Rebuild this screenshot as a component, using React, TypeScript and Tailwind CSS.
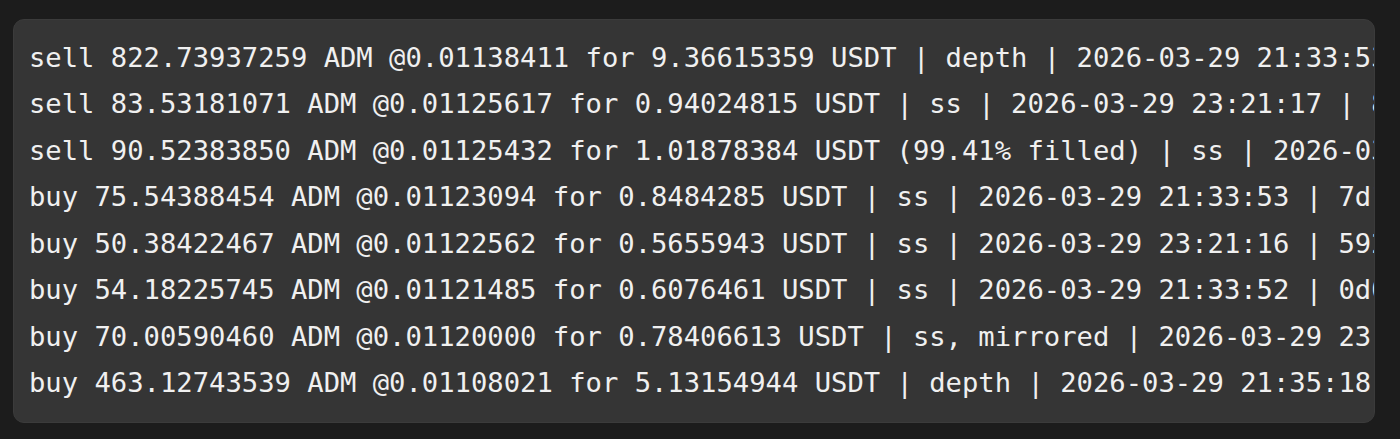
const lines: string[] = [
  "sell 822.73937259 ADM @0.01138411 for 9.36615359 USDT | depth | 2026-03-29 21:33:53 | 3f9a1c7e",
  "sell 83.53181071 ADM @0.01125617 for 0.94024815 USDT | ss | 2026-03-29 23:21:17 | 8b2e4d10",
  "sell 90.52383850 ADM @0.01125432 for 1.01878384 USDT (99.41% filled) | ss | 2026-03-29 21:33:52 | 4c1d",
  "buy 75.54388454 ADM @0.01123094 for 0.8484285 USDT | ss | 2026-03-29 21:33:53 | 7d1f0a2b",
  "buy 50.38422467 ADM @0.01122562 for 0.5655943 USDT | ss | 2026-03-29 23:21:16 | 592c8e1a",
  "buy 54.18225745 ADM @0.01121485 for 0.6076461 USDT | ss | 2026-03-29 21:33:52 | 0d0b7f3e",
  "buy 70.00590460 ADM @0.01120000 for 0.78406613 USDT | ss, mirrored | 2026-03-29 23:21:16 | 1a9e",
  "buy 463.12743539 ADM @0.01108021 for 5.13154944 USDT | depth | 2026-03-29 21:35:18 | 6e2f0c9d",
];

export default function App() {
  return (
    <div className="w-[1400px] h-[439px] bg-[#1c1c1c] pt-[19px] pl-[13px]">
      {/* Log block, lines run past the right edge and get clipped */}
      <div className="w-[1362px] h-[404px] rounded-[11px] bg-[#353535] border border-[#3b3b3b] overflow-hidden pl-[15px] pt-[15px]">
        <pre
          className="text-[27.2px] leading-[46.43px] text-[#f0f0f0] whitespace-pre"
          style={{ fontFamily: '"DejaVu Sans Mono", monospace' }}
        >
          {lines.map((line, i) => (
            <div key={i}>{line}</div>
          ))}
        </pre>
      </div>
    </div>
  );
}
